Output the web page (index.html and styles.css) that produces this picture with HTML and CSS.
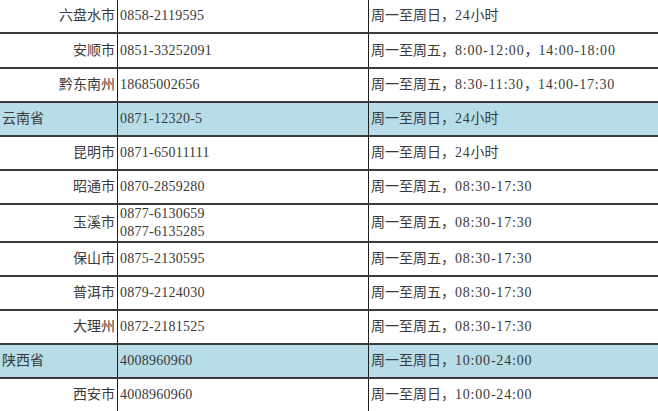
FILE: index.html
```html
<!DOCTYPE html>
<html lang="zh-CN">
<head>
<meta charset="utf-8">
<title>服务热线</title>
<link rel="stylesheet" href="styles.css">
</head>
<body>
<table class="hotline">
  <colgroup>
    <col class="c-city">
    <col class="c-phone">
    <col class="c-time">
  </colgroup>
  <tbody>
    <tr class="row"><td class="city">六盘水市</td><td class="phone">0858-2119595</td><td class="time">周一至周日，<span class="num">24</span>小时</td></tr>
    <tr class="row row-tall"><td class="city">安顺市</td><td class="phone">0851-33252091</td><td class="time">周一至周五，<span class="num">8:00-12:00</span>，<span class="num">14:00-18:00</span></td></tr>
    <tr class="row"><td class="city">黔东南州</td><td class="phone">18685002656</td><td class="time">周一至周五，<span class="num">8:30-11:30</span>，<span class="num">14:00-17:30</span></td></tr>
    <tr class="row prov"><td class="pname">云南省</td><td class="phone">0871-12320-5</td><td class="time">周一至周日，<span class="num">24</span>小时</td></tr>
    <tr class="row"><td class="city">昆明市</td><td class="phone">0871-65011111</td><td class="time">周一至周日，<span class="num">24</span>小时</td></tr>
    <tr class="row"><td class="city">昭通市</td><td class="phone">0870-2859280</td><td class="time">周一至周五，<span class="num">08:30-17:30</span></td></tr>
    <tr class="row row-double"><td class="city">玉溪市</td><td class="phone">0877-6130659<br>0877-6135285</td><td class="time">周一至周五，<span class="num">08:30-17:30</span></td></tr>
    <tr class="row"><td class="city">保山市</td><td class="phone">0875-2130595</td><td class="time">周一至周五，<span class="num">08:30-17:30</span></td></tr>
    <tr class="row"><td class="city">普洱市</td><td class="phone">0879-2124030</td><td class="time">周一至周五，<span class="num">08:30-17:30</span></td></tr>
    <tr class="row"><td class="city">大理州</td><td class="phone">0872-2181525</td><td class="time">周一至周五，<span class="num">08:30-17:30</span></td></tr>
    <tr class="row prov"><td class="pname">陕西省</td><td class="phone">4008960960</td><td class="time">周一至周日，<span class="num">10:00-24:00</span></td></tr>
    <tr class="row"><td class="city">西安市</td><td class="phone">4008960960</td><td class="time">周一至周日，<span class="num">10:00-24:00</span></td></tr>
  </tbody>
</table>
</body>
</html>
```
FILE: styles.css
```css
html, body {
  margin: 0;
  padding: 0;
  background: #ffffff;
  overflow: hidden;
}

.hotline {
  border-collapse: collapse;
  table-layout: fixed;
  width: 659px;
  margin-top: -2px;
  margin-left: -1px;
  font-family: "Liberation Serif", "Noto Sans CJK SC", serif;
  font-size: 14px;
  color: #3a3a3a;
}

.c-city { width: 118px; }
.c-phone { width: 251px; }
.c-time { width: 290px; }

.row { height: 34px; }
.row-tall { height: 35px; }
.row-double { height: 38px; }

.hotline td {
  border-top: 2px solid #3b3b3b;
  border-bottom: 2px solid #3b3b3b;
  border-left: 1px solid #1e1e1e;
  border-right: 1px solid #1e1e1e;
  padding: 0 2px;
  white-space: nowrap;
  overflow: hidden;
  vertical-align: middle;
  line-height: 18px;
}

.hotline td.time {
  border-right: 0;
}

.city {
  text-align: right;
}

.pname {
  text-align: left;
}

.prov td {
  background: #b7dde8;
}

.phone {
  text-align: left;
  letter-spacing: 0.25px;
}

.time {
  text-align: left;
}

.num {
  letter-spacing: 0.8px;
}
```
